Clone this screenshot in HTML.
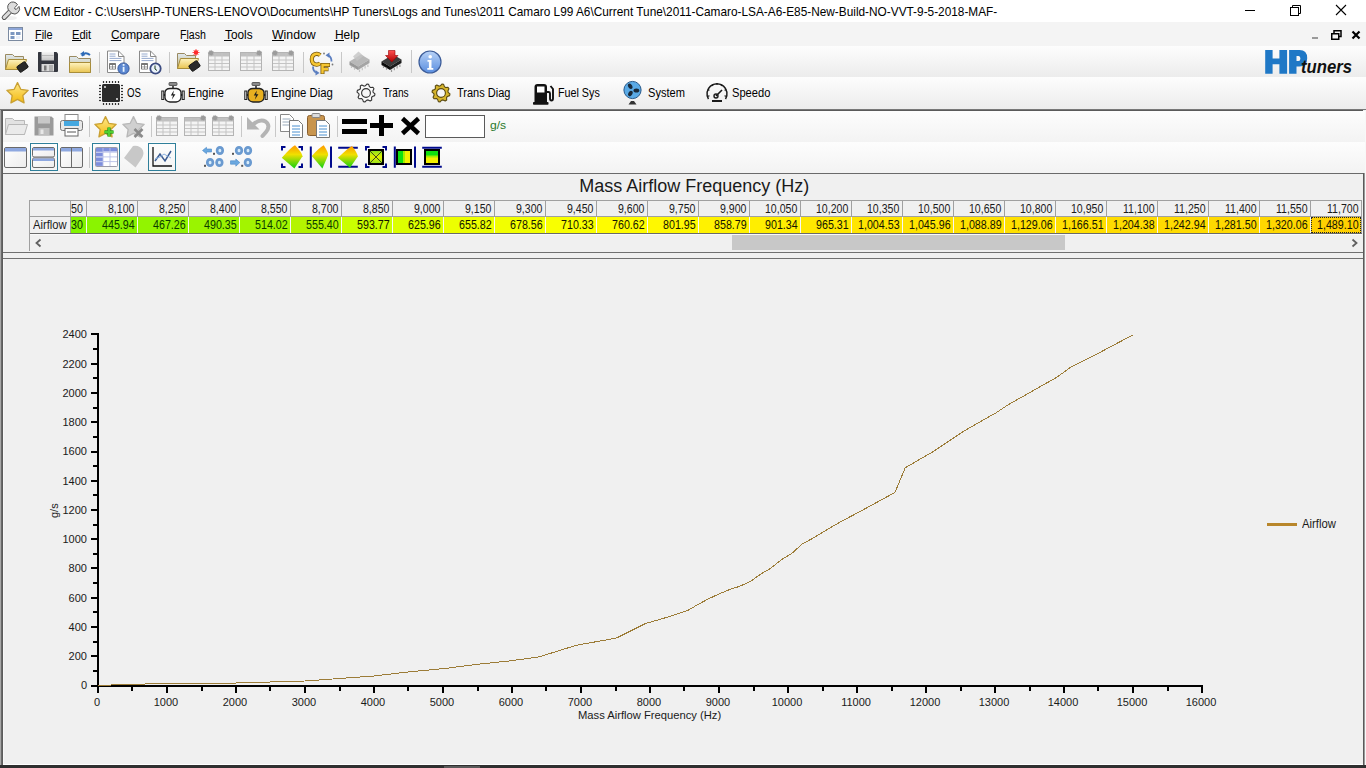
<!DOCTYPE html><html><head><meta charset="utf-8"><title>VCM Editor</title><style>
*{margin:0;padding:0;box-sizing:border-box}
html,body{width:1366px;height:768px;overflow:hidden;background:#f0f0f0;font-family:"Liberation Sans", sans-serif}
.t{position:absolute;white-space:nowrap;line-height:1;}
.b{position:absolute}
.s{position:absolute;overflow:visible}
</style></head><body><div class="b" style="left:0px;top:0px;width:1366px;height:22px;background:#fff"></div>
<svg class="s" style="left:1px;top:1px" width="22" height="22" viewBox="0 0 22 22"><ellipse cx="9" cy="17" rx="7" ry="2" fill="#000" opacity="0.06"/><path d="M3.2 16.4 L10.5 9.1" stroke="#555" stroke-width="5" stroke-linecap="round"/><path d="M3.2 16.4 L10.5 9.1" stroke="#dcdcdc" stroke-width="3" stroke-linecap="round"/><path d="M9 10.5 A5.2 5.2 0 1 1 16.5 3.8 L13.6 6.7 A1.6 1.6 0 0 0 15.3 8.4 L18 5.4 A5.2 5.2 0 0 1 10.8 12.3 Z" fill="#dcdcdc" stroke="#555" stroke-width="1"/></svg>
<div class="t" style="left:23.70px;top:5.20px;font-size:13px;color:#000;transform:scaleX(0.9102);transform-origin:0 0;">VCM Editor - C:\Users\HP-TUNERS-LENOVO\Documents\HP Tuners\Logs and Tunes\2011 Camaro L99 A6\Current Tune\2011-Camaro-LSA-A6-E85-New-Build-NO-VVT-9-5-2018-MAF-</div>
<div class="b" style="left:1245px;top:10px;width:10px;height:1px;background:#000"></div>
<svg class="s" style="left:1289px;top:4px" width="12" height="12" viewBox="0 0 12 12"><rect x="1.5" y="3.5" width="8" height="8" fill="none" stroke="#000"/><path d="M3.5 3.5 V1.5 H11.5 V9.5 H9.5" fill="none" stroke="#000"/></svg>
<svg class="s" style="left:1336px;top:5px" width="10" height="10" viewBox="0 0 10 10"><path d="M0 0 L10 10 M10 0 L0 10" stroke="#000" stroke-width="1.1"/></svg>
<div class="b" style="left:0px;top:22px;width:1366px;height:24px;background:#f4f4f4"></div>
<svg class="s" style="left:8px;top:27px" width="15" height="14" viewBox="0 0 15 14"><rect x="0.5" y="0.5" width="14" height="13" fill="#fff" stroke="#7b8aa0"/><rect x="1" y="1" width="13" height="2" fill="#8ea6d8"/><rect x="2.5" y="5" width="4" height="3" fill="#7c97c0"/><rect x="8" y="5" width="4.5" height="3" fill="#7c97c0"/><rect x="2.5" y="9" width="4" height="3" fill="#7c97c0"/><rect x="8" y="9" width="4.5" height="3" fill="#e8eef8"/></svg>
<div class="t" style="left:35.40px;top:28.62px;font-size:12.5px;color:#000;transform:scaleX(0.8696);transform-origin:0 0;">File</div>
<div class="b" style="left:35px;top:40px;width:8px;height:1px;background:#000"></div>
<div class="t" style="left:72.40px;top:28.62px;font-size:12.5px;color:#000;transform:scaleX(0.8879);transform-origin:0 0;">Edit</div>
<div class="b" style="left:72px;top:40px;width:9px;height:1px;background:#000"></div>
<div class="t" style="left:111.10px;top:28.62px;font-size:12.5px;color:#000;transform:scaleX(0.9518);transform-origin:0 0;">Compare</div>
<div class="b" style="left:111px;top:40px;width:10px;height:1px;background:#000"></div>
<div class="t" style="left:179.50px;top:28.62px;font-size:12.5px;color:#000;transform:scaleX(0.8457);transform-origin:0 0;">Flash</div>
<div class="b" style="left:184px;top:40px;width:4px;height:1px;background:#000"></div>
<div class="t" style="left:225.00px;top:28.62px;font-size:12.5px;color:#000;transform:scaleX(0.9442);transform-origin:0 0;">Tools</div>
<div class="b" style="left:224px;top:40px;width:8px;height:1px;background:#000"></div>
<div class="t" style="left:272.00px;top:28.62px;font-size:12.5px;color:#000;transform:scaleX(0.9843);transform-origin:0 0;">Window</div>
<div class="b" style="left:272px;top:40px;width:12px;height:1px;background:#000"></div>
<div class="t" style="left:335.00px;top:28.62px;font-size:12.5px;color:#000;transform:scaleX(0.9553);transform-origin:0 0;">Help</div>
<div class="b" style="left:334px;top:40px;width:10px;height:1px;background:#000"></div>
<div class="b" style="left:1312px;top:37px;width:6px;height:2px;background:#9a9a9a"></div>
<svg class="s" style="left:1331px;top:29.5px" width="11" height="10" viewBox="0 0 11 10"><rect x="0.75" y="3.75" width="7" height="5.5" fill="none" stroke="#000" stroke-width="1.5"/><path d="M3 3.5 V0.75 H10 V6.5 H8" fill="none" stroke="#000" stroke-width="1.5"/></svg>
<svg class="s" style="left:1352px;top:31px" width="8" height="8" viewBox="0 0 8 8"><path d="M0.5 0.5 L7.5 7.5 M7.5 0.5 L0.5 7.5" stroke="#000" stroke-width="2.2"/></svg>
<div class="b" style="left:0px;top:46px;width:1366px;height:31px;background:linear-gradient(#fdfdfd,#ececec)"></div>
<div class="b" style="left:0px;top:77px;width:1366px;height:32px;background:linear-gradient(#fdfdfd,#ececec)"></div>
<div class="b" style="left:0px;top:109px;width:1366px;height:1px;background:#787878"></div>
<div class="b" style="left:0px;top:110px;width:1366px;height:658px;background:#f0f0f0"></div>
<div class="b" style="left:0px;top:110px;width:1px;height:658px;background:#a8a8a8"></div>
<div class="b" style="left:1px;top:110px;width:1px;height:658px;background:#6a6a6a"></div>
<div class="b" style="left:2px;top:110px;width:1px;height:658px;background:#5c5c5c"></div>
<div class="b" style="left:3px;top:174px;width:1px;height:590px;background:#f8f8f8"></div>
<div class="b" style="left:1363px;top:173px;width:1px;height:595px;background:#5a5a5a"></div>
<div class="b" style="left:1364px;top:173px;width:1px;height:595px;background:#9a9a9a"></div>
<div class="b" style="left:1365px;top:110px;width:1px;height:658px;background:#f8f8f8"></div>
<div class="b" style="left:1px;top:110px;width:1362px;height:1px;background:#5a5a5a"></div>
<div class="b" style="left:3px;top:111px;width:1362px;height:31px;background:linear-gradient(#fdfdfd,#f3f3f3)"></div>
<div class="b" style="left:3px;top:142px;width:1362px;height:31px;background:linear-gradient(#fdfdfd,#f3f3f3)"></div>
<div class="b" style="left:3px;top:173px;width:1360px;height:1px;background:#6a6a6a"></div>
<div class="b" style="left:0px;top:765px;width:1366px;height:3px;background:#2f2f2f"></div>
<div class="b" style="left:3px;top:764px;width:1360px;height:1px;background:#fff"></div>
<div class="b" style="left:444px;top:766px;width:36px;height:2px;background:#5a5a5a"></div>
<svg width="0" height="0" style="position:absolute"><defs>
<linearGradient id="gFold" x1="0" y1="0" x2="0" y2="1"><stop offset="0" stop-color="#fff4c0"/><stop offset="1" stop-color="#e9c451"/></linearGradient>
<linearGradient id="gFoldB" x1="0" y1="0" x2="0" y2="1"><stop offset="0" stop-color="#dfe9f3"/><stop offset="1" stop-color="#c9b978"/></linearGradient>
<linearGradient id="gStar" x1="0" y1="0" x2="0" y2="1"><stop offset="0" stop-color="#ffe98a"/><stop offset="1" stop-color="#f2b90f"/></linearGradient>
<linearGradient id="gGrey" x1="0" y1="0" x2="0" y2="1"><stop offset="0" stop-color="#e8e8e8"/><stop offset="1" stop-color="#c8c8c8"/></linearGradient>
<linearGradient id="gInfo" x1="0" y1="0" x2="0" y2="1"><stop offset="0" stop-color="#b8d2f6"/><stop offset="1" stop-color="#5a8ee0"/></linearGradient>
<linearGradient id="gDia" x1="0" y1="0" x2="1" y2="1"><stop offset="0" stop-color="#ff9a00"/><stop offset="0.45" stop-color="#f3e000"/><stop offset="1" stop-color="#00d000"/></linearGradient>
<linearGradient id="gWin" x1="0" y1="0" x2="1" y2="1"><stop offset="0" stop-color="#ffffff"/><stop offset="1" stop-color="#ececec"/></linearGradient>
<linearGradient id="gFan" x1="0" y1="0" x2="0" y2="1"><stop offset="0" stop-color="#8cc8f0"/><stop offset="1" stop-color="#3d95d8"/></linearGradient>
</defs></svg>
<svg class="s" style="left:4px;top:50px" width="24" height="24" viewBox="0 0 24 24"><path d="M1.5 4.5 h7 l2 2 h9 v13 h-18z" fill="url(#gFoldB)" stroke="#9a8a60"/><path d="M1.5 19.5 l3 -10 h18 l-3 10z" fill="url(#gFold)" stroke="#a88d3a"/><rect x="13.5" y="13.5" width="10" height="7" rx="1.2" transform="rotate(-35 18.5 17)" fill="#2a2a2a" stroke="#111" stroke-width="0.8"/></svg>
<svg class="s" style="left:37px;top:51px" width="22" height="22" viewBox="0 0 22 22"><path d="M1.5 1 h18 l1.5 1.5 v17.5 q0 1 -1 1 h-18 q-1 0 -1 -1 v-18 q0 -1 0.5 -1z" fill="#34373f"/><defs><linearGradient id="gFlp" x1="0" y1="0" x2="0" y2="1"><stop offset="0" stop-color="#f4f4f4"/><stop offset="1" stop-color="#c4c4c4"/></linearGradient></defs><rect x="4.5" y="1" width="12.5" height="8.5" fill="url(#gFlp)"/><path d="M5 4.5 h11.5" stroke="#b0b0b0" stroke-width="0.8"/><rect x="4.5" y="13" width="12.5" height="7.5" fill="#d8d8d8"/><rect x="7" y="14.5" width="2.5" height="5" fill="#777"/><rect x="12" y="14" width="4" height="6" fill="#b0b0b0"/></svg>
<svg class="s" style="left:68px;top:50px" width="24" height="24" viewBox="0 0 24 24"><path d="M1.5 6.5 h7 l2 2 h12 v14 h-21z" fill="url(#gFoldB)" stroke="#9a8a60"/><path d="M1.5 22.5 v-10 h21 v10z" fill="url(#gFold)" stroke="#a88d3a"/><path d="M14 6 q3 -5 8 -1" fill="none" stroke="#2e6bb8" stroke-width="2"/><path d="M12 4 l4 -3 l0.5 5z" fill="#2e6bb8"/></svg>
<div class="b" style="left:99px;top:52px;width:1px;height:21px;background:#c8c8c8"></div>
<svg class="s" style="left:106px;top:50px" width="24" height="24" viewBox="0 0 24 24"><path d="M1.5 1 h11 l5.5 5.5 v16 h-16.5z" fill="#fff" stroke="#8a8a8a" stroke-width="1"/><path d="M12.5 1 v5.5 h5.5" fill="none" stroke="#8a8a8a"/><path d="M3.5 4 h6 M3.5 6.2 h6 M3.5 8.4 h12 M3.5 10.6 h12" stroke="#8aa0c8" stroke-width="0.9"/><rect x="3" y="13" width="7" height="6.5" rx="0.8" fill="#777"/><rect x="4" y="15" width="2.2" height="1.6" fill="#fff"/><rect x="6.9" y="15" width="2.2" height="1.6" fill="#fff"/><rect x="4" y="17.3" width="2.2" height="1.4" fill="#fff"/><rect x="6.9" y="17.3" width="2.2" height="1.4" fill="#fff"/><circle cx="17.5" cy="18.5" r="5.6" fill="#5a86d0" stroke="#34569a" stroke-width="1"/><rect x="16.7" y="16.8" width="1.8" height="5" fill="#e8f4ff"/><rect x="16.7" y="14" width="1.8" height="1.8" fill="#e8f4ff"/></svg>
<svg class="s" style="left:138px;top:50px" width="24" height="24" viewBox="0 0 24 24"><path d="M1.5 1 h11 l5.5 5.5 v16 h-16.5z" fill="#fff" stroke="#8a8a8a" stroke-width="1"/><path d="M12.5 1 v5.5 h5.5" fill="none" stroke="#8a8a8a"/><path d="M3.5 4 h6 M3.5 6.2 h6 M3.5 8.4 h12 M3.5 10.6 h12" stroke="#8aa0c8" stroke-width="0.9"/><rect x="3" y="13" width="7" height="6.5" rx="0.8" fill="#777"/><rect x="4" y="15" width="2.2" height="1.6" fill="#fff"/><rect x="6.9" y="15" width="2.2" height="1.6" fill="#fff"/><rect x="4" y="17.3" width="2.2" height="1.4" fill="#fff"/><rect x="6.9" y="17.3" width="2.2" height="1.4" fill="#fff"/><circle cx="17.5" cy="18.5" r="5.2" fill="#eaf2fa" stroke="#3a4a80" stroke-width="1.8"/><path d="M17 15.5 V19 L19 20.5" stroke="#1a3a1a" stroke-width="1" fill="none"/></svg>
<div class="b" style="left:169px;top:52px;width:1px;height:21px;background:#c8c8c8"></div>
<svg class="s" style="left:176px;top:49px" width="24" height="24" viewBox="0 0 24 24"><path d="M1.5 4.5 h7 l2 2 h9 v13 h-18z" fill="url(#gFoldB)" stroke="#9a8a60"/><path d="M1.5 19.5 l3 -10 h18 l-3 10z" fill="url(#gFold)" stroke="#a88d3a"/><rect x="13.5" y="13.5" width="10" height="7" rx="1.2" transform="rotate(-35 18.5 17)" fill="#2a2a2a" stroke="#111" stroke-width="0.8"/><circle cx="20" cy="3.5" r="2.2" fill="#ff2020"/><path d="M20 0 v7 M16.5 3.5 h7 M17.6 1.1 l4.8 4.8 M22.4 1.1 l-4.8 4.8" stroke="#ff3030" stroke-width="0.8"/></svg>
<svg class="s" style="left:207px;top:49px" width="24" height="24" viewBox="0 0 24 24"><rect x="1.5" y="3.5" width="21" height="18" fill="#f4f4f4" stroke="#b4b4b4"/><rect x="2" y="4" width="20" height="3.5" fill="#c0c0c0"/><path d="M2 11 h20" stroke="#c4c4c4"/><path d="M2 14.5 h20" stroke="#c4c4c4"/><path d="M2 18 h20" stroke="#c4c4c4"/><path d="M8 4 v17" stroke="#c4c4c4"/><path d="M15 4 v17" stroke="#c4c4c4"/><circle cx="4" cy="4" r="2.6" fill="#9c9c9c" stroke="#bdbdbd" stroke-dasharray="1 1"/></svg>
<svg class="s" style="left:239px;top:49px" width="24" height="24" viewBox="0 0 24 24"><rect x="1.5" y="3.5" width="21" height="18" fill="#f4f4f4" stroke="#b4b4b4"/><rect x="2" y="4" width="20" height="3.5" fill="#c0c0c0"/><path d="M2 11 h20" stroke="#c4c4c4"/><path d="M2 14.5 h20" stroke="#c4c4c4"/><path d="M2 18 h20" stroke="#c4c4c4"/><path d="M8 4 v17" stroke="#c4c4c4"/><path d="M15 4 v17" stroke="#c4c4c4"/><circle cx="20" cy="4" r="2.6" fill="#9c9c9c" stroke="#bdbdbd" stroke-dasharray="1 1"/></svg>
<svg class="s" style="left:271px;top:49px" width="24" height="24" viewBox="0 0 24 24"><rect x="1.5" y="3.5" width="21" height="18" fill="#f4f4f4" stroke="#b4b4b4"/><rect x="2" y="4" width="20" height="3.5" fill="#c0c0c0"/><path d="M2 11 h20" stroke="#c4c4c4"/><path d="M2 14.5 h20" stroke="#c4c4c4"/><path d="M2 18 h20" stroke="#c4c4c4"/><path d="M8 4 v17" stroke="#c4c4c4"/><path d="M15 4 v17" stroke="#c4c4c4"/><circle cx="4" cy="4" r="2.6" fill="#9c9c9c" stroke="#bdbdbd" stroke-dasharray="1 1"/><circle cx="20" cy="4" r="2.6" fill="#9c9c9c" stroke="#bdbdbd" stroke-dasharray="1 1"/></svg>
<div class="b" style="left:303px;top:52px;width:1px;height:21px;background:#c8c8c8"></div>
<svg class="s" style="left:310px;top:51px" width="24" height="24" viewBox="0 0 24 24"><path d="M10.2 4.2 Q8.5 2.6 6.5 2.8 Q1.8 3.3 1.8 8.3 Q1.8 13.3 6.5 13.6 Q8.8 13.8 10.2 12.2" fill="none" stroke="#7a5a10" stroke-width="4.2"/><path d="M10.2 4.2 Q8.5 2.6 6.5 2.8 Q1.8 3.3 1.8 8.3 Q1.8 13.3 6.5 13.6 Q8.8 13.8 10.2 12.2" fill="none" stroke="#f6c632" stroke-width="2.6"/><path d="M12.5 23 V14 H20 M12.5 18.2 H18.5" fill="none" stroke="#7a5a10" stroke-width="4"/><path d="M12.5 22.5 V14 H19.5 M12.5 18.2 H18" fill="none" stroke="#f6c632" stroke-width="2.4"/><path d="M21.5 10.5 Q21.5 6 18.5 4.5" fill="none" stroke="#5b7ec0" stroke-width="1.8"/><path d="M15.5 4.2 L19.5 1.5 L19.5 7z" fill="#5b7ec0"/><path d="M3 15.5 Q3 20 6 21.5" fill="none" stroke="#5b7ec0" stroke-width="1.8"/><path d="M9.5 22 L5.5 24.5 L5.5 19z" fill="#5b7ec0"/><circle cx="14" cy="2.5" r="0.9" fill="#777"/><circle cx="22.5" cy="13.5" r="0.9" fill="#777"/></svg>
<div class="b" style="left:341px;top:52px;width:1px;height:21px;background:#c8c8c8"></div>
<svg class="s" style="left:348px;top:49px" width="24" height="24" viewBox="0 0 24 24"><path d="M1.5 12.5 L13 5.5 L21.5 10.5 L10 17.5 Z" fill="#b8b8b8"/><path d="M1.5 12.5 V16 L10 21 V17.5 Z" fill="#989898"/><path d="M10 17.5 V21 L21.5 14 V10.5 Z" fill="#a4a4a4"/><path d="M11.5 20.5 v2.5" stroke="#c4c4c4" stroke-width="1.2"/><path d="M14.3 18.8 v2.5" stroke="#c4c4c4" stroke-width="1.2"/><path d="M17.1 17.1 v2.5" stroke="#c4c4c4" stroke-width="1.2"/><path d="M19.9 15.4 v2.5" stroke="#c4c4c4" stroke-width="1.2"/><path d="M3.5 16.8 v2.2" stroke="#c4c4c4" stroke-width="1.2"/><path d="M6.5 18.6 v2.2" stroke="#c4c4c4" stroke-width="1.2"/><path d="M5 7.5 L10.5 2.5 L15.5 7 L9 12z" fill="#c4c4c4" opacity="0.8"/></svg>
<svg class="s" style="left:380px;top:49px" width="24" height="24" viewBox="0 0 24 24"><path d="M1.5 12.5 L13 5.5 L21.5 10.5 L10 17.5 Z" fill="#3c3c3c"/><path d="M1.5 12.5 V16 L10 21 V17.5 Z" fill="#0c0c0c"/><path d="M10 17.5 V21 L21.5 14 V10.5 Z" fill="#1c1c1c"/><path d="M11.5 20.5 v2.5" stroke="#9a9a9a" stroke-width="1.2"/><path d="M14.3 18.8 v2.5" stroke="#9a9a9a" stroke-width="1.2"/><path d="M17.1 17.1 v2.5" stroke="#9a9a9a" stroke-width="1.2"/><path d="M19.9 15.4 v2.5" stroke="#9a9a9a" stroke-width="1.2"/><path d="M3.5 16.8 v2.2" stroke="#9a9a9a" stroke-width="1.2"/><path d="M6.5 18.6 v2.2" stroke="#9a9a9a" stroke-width="1.2"/><defs><linearGradient id="gArr" x1="0" y1="0" x2="0" y2="1"><stop offset="0" stop-color="#ff5050"/><stop offset="1" stop-color="#b00000"/></linearGradient></defs><path d="M8.5 1.5 H15 V6.5 H18 L11.8 13 L5.5 6.5 H8.5 Z" fill="url(#gArr)" stroke="#900" stroke-width="0.6"/></svg>
<div class="b" style="left:411px;top:50px;width:1px;height:23px;background:#c8c8c8"></div>
<svg class="s" style="left:418px;top:50px" width="24" height="24" viewBox="0 0 24 24"><circle cx="12" cy="12" r="11" fill="url(#gInfo)" stroke="#3c5c98" stroke-width="1.2"/><path d="M9.5 10 h4 v8 h1.8 v1.8 h-6 v-1.8 h1.6 v-6.2 h-1.4z" fill="#fff"/><circle cx="12.2" cy="6.8" r="1.8" fill="#fff"/></svg>
<svg class="s" style="left:0;top:0" width="1366" height="768"><path d="M1265.2 50.1 H1272.6 V58.6 H1279.4 V50.1 H1287.1 V73.7 H1279.4 V64.3 H1272.6 V73.7 H1265.2 Z" fill="#1f78c6"/><path d="M1289.1 50.1 H1299.5 Q1307.2 50.1 1307.2 58.2 Q1307.2 66.4 1299.5 66.4 H1296.5 V73.7 H1289.1 Z M1296.5 56 V61 H1298.6 Q1300.4 61 1300.4 58.5 Q1300.4 56 1298.6 56 Z" fill="#1f78c6" fill-rule="evenodd"/></svg>
<div class="t" style="left:1301.00px;top:58.46px;font-size:18px;color:#111;font-weight:bold;transform:scaleX(0.9273);transform-origin:0 0;font-style:italic">tuners</div>
<svg class="s" style="left:5.5px;top:81px" width="23" height="23" viewBox="0 0 23 23"><polygon points="11.50,1.60 14.79,8.27 22.15,9.34 16.83,14.53 18.08,21.86 11.50,18.40 4.92,21.86 6.17,14.53 0.85,9.34 8.21,8.27" fill="url(#gStar)" stroke="#c9a032" stroke-width="1.3" stroke-linejoin="round"/></svg>
<div class="t" style="left:32.30px;top:87.14px;font-size:12px;color:#000;transform:scaleX(0.9418);transform-origin:0 0;">Favorites</div>
<svg class="s" style="left:99px;top:81px" width="24" height="24" viewBox="0 0 24 24"><rect x="3" y="3" width="18" height="18" rx="1.5" fill="#2b2b2b"/><rect x="3.9" y="0" width="1.2" height="2" fill="#333"/><rect x="3.9" y="22" width="1.2" height="2" fill="#333"/><rect x="0" y="3.9" width="2" height="1.2" fill="#333"/><rect x="22" y="3.9" width="2" height="1.2" fill="#333"/><rect x="6.9" y="0" width="1.2" height="2" fill="#333"/><rect x="6.9" y="22" width="1.2" height="2" fill="#333"/><rect x="0" y="6.9" width="2" height="1.2" fill="#333"/><rect x="22" y="6.9" width="2" height="1.2" fill="#333"/><rect x="9.9" y="0" width="1.2" height="2" fill="#333"/><rect x="9.9" y="22" width="1.2" height="2" fill="#333"/><rect x="0" y="9.9" width="2" height="1.2" fill="#333"/><rect x="22" y="9.9" width="2" height="1.2" fill="#333"/><rect x="12.9" y="0" width="1.2" height="2" fill="#333"/><rect x="12.9" y="22" width="1.2" height="2" fill="#333"/><rect x="0" y="12.9" width="2" height="1.2" fill="#333"/><rect x="22" y="12.9" width="2" height="1.2" fill="#333"/><rect x="15.9" y="0" width="1.2" height="2" fill="#333"/><rect x="15.9" y="22" width="1.2" height="2" fill="#333"/><rect x="0" y="15.9" width="2" height="1.2" fill="#333"/><rect x="22" y="15.9" width="2" height="1.2" fill="#333"/><rect x="18.9" y="0" width="1.2" height="2" fill="#333"/><rect x="18.9" y="22" width="1.2" height="2" fill="#333"/><rect x="0" y="18.9" width="2" height="1.2" fill="#333"/><rect x="22" y="18.9" width="2" height="1.2" fill="#333"/><circle cx="6" cy="6" r="0.9" fill="#fff"/><circle cx="18" cy="18" r="0.9" fill="#fff"/></svg>
<div class="t" style="left:126.60px;top:87.14px;font-size:12px;color:#000;transform:scaleX(0.8058);transform-origin:0 0;">OS</div>
<svg class="s" style="left:161px;top:81px" width="24" height="24" viewBox="0 0 24 24"><rect x="8" y="1.5" width="8" height="3" rx="0.8" fill="#8a8a8a" stroke="#444" stroke-width="0.8"/><rect x="11" y="4.5" width="2" height="3" fill="#555"/><path d="M0.8 10 H2.8 V18.5 H0.8 Z M21.2 10 H23.2 V18.5 H21.2 Z" fill="#fff" stroke="#222" stroke-width="1.1"/><path d="M2.8 14 H4 M20 14 H21.2" stroke="#222" stroke-width="1.8"/><path d="M4 11.5 Q4.5 7.5 9 7.5 H15.5 Q19.5 8 20 11.5 V16.5 Q19.5 20.5 15 21 H9 Q4.5 20.5 4 16.5 Z" fill="#fff" stroke="#222" stroke-width="1.3"/><path d="M12.8 9.5 L9.8 14.5 H12 L10.8 18.8 L14.4 13.2 H12.2 Z" fill="#1e1e1e"/></svg>
<div class="t" style="left:188.20px;top:87.14px;font-size:12px;color:#000;transform:scaleX(0.9579);transform-origin:0 0;">Engine</div>
<svg class="s" style="left:244px;top:81px" width="24" height="24" viewBox="0 0 24 24"><rect x="8" y="1.5" width="8" height="3" rx="0.8" fill="#8a8a8a" stroke="#444" stroke-width="0.8"/><rect x="11" y="4.5" width="2" height="3" fill="#555"/><path d="M0.8 10 H2.8 V18.5 H0.8 Z M21.2 10 H23.2 V18.5 H21.2 Z" fill="#fff" stroke="#222" stroke-width="1.1"/><path d="M2.8 14 H4 M20 14 H21.2" stroke="#222" stroke-width="1.8"/><path d="M4 11.5 Q4.5 7.5 9 7.5 H15.5 Q19.5 8 20 11.5 V16.5 Q19.5 20.5 15 21 H9 Q4.5 20.5 4 16.5 Z" fill="#e8b020" stroke="#222" stroke-width="1.3"/><path d="M12.8 9.5 L9.8 14.5 H12 L10.8 18.8 L14.4 13.2 H12.2 Z" fill="#1e1e1e"/></svg>
<div class="t" style="left:271.30px;top:87.14px;font-size:12px;color:#000;transform:scaleX(0.9468);transform-origin:0 0;">Engine Diag</div>
<svg class="s" style="left:356px;top:83px" width="20" height="20" viewBox="0 0 20 20"><polygon points="18.96,10.90 18.61,12.63 16.34,13.41 15.56,14.58 15.70,16.97 14.23,17.95 12.08,16.89 10.69,17.17 9.10,18.96 7.37,18.61 6.59,16.34 5.42,15.56 3.03,15.70 2.05,14.23 3.11,12.08 2.83,10.69 1.04,9.10 1.39,7.37 3.66,6.59 4.44,5.42 4.30,3.03 5.77,2.05 7.92,3.11 9.31,2.83 10.90,1.04 12.63,1.39 13.41,3.66 14.58,4.44 16.97,4.30 17.95,5.77 16.89,7.92 17.17,9.31" fill="#fafafa" stroke="#333" stroke-width="1.1" stroke-linejoin="round"/><circle cx="10" cy="10" r="4.4" fill="#f6f6f6" stroke="#333" stroke-width="1.1"/></svg>
<div class="t" style="left:382.60px;top:87.14px;font-size:12px;color:#000;transform:scaleX(0.8496);transform-origin:0 0;">Trans</div>
<svg class="s" style="left:431px;top:83px" width="20" height="20" viewBox="0 0 20 20"><polygon points="18.96,10.90 18.61,12.63 16.34,13.41 15.56,14.58 15.70,16.97 14.23,17.95 12.08,16.89 10.69,17.17 9.10,18.96 7.37,18.61 6.59,16.34 5.42,15.56 3.03,15.70 2.05,14.23 3.11,12.08 2.83,10.69 1.04,9.10 1.39,7.37 3.66,6.59 4.44,5.42 4.30,3.03 5.77,2.05 7.92,3.11 9.31,2.83 10.90,1.04 12.63,1.39 13.41,3.66 14.58,4.44 16.97,4.30 17.95,5.77 16.89,7.92 17.17,9.31" fill="#d6b52c" stroke="#5a4a10" stroke-width="1.1" stroke-linejoin="round"/><circle cx="10" cy="10" r="4.4" fill="#f6f6f6" stroke="#5a4a10" stroke-width="1.1"/></svg>
<div class="t" style="left:457.30px;top:87.14px;font-size:12px;color:#000;transform:scaleX(0.9167);transform-origin:0 0;">Trans Diag</div>
<svg class="s" style="left:533px;top:82.5px" width="21" height="23" viewBox="0 0 21 23"><path d="M1.5 4 Q1.5 1 4.5 1 H11 Q14 1 14 4 V19.5 H1.5 Z" fill="#111"/><rect x="4" y="3.5" width="7.5" height="6" fill="#fff"/><rect x="0" y="19" width="15.5" height="2.8" rx="0.8" fill="#111"/><path d="M14 9 H15.5 Q17 9 17 10.5 V15.5 Q17 17.5 18.5 17.5 Q20 17.5 20 15.5 V6 L17.5 3" fill="none" stroke="#111" stroke-width="1.9"/></svg>
<div class="t" style="left:558.30px;top:87.14px;font-size:12px;color:#000;transform:scaleX(0.8944);transform-origin:0 0;">Fuel Sys</div>
<svg class="s" style="left:622.5px;top:80.5px" width="19" height="24" viewBox="0 0 19 24"><circle cx="9.5" cy="9" r="8.6" fill="#5aaae6" stroke="#2a5a8a" stroke-width="1"/><ellipse cx="7.2" cy="5.2" rx="2.9" ry="2" fill="#1a2a3a" transform="rotate(60 7.2 5.2)"/><ellipse cx="13.4" cy="9.6" rx="2.9" ry="2" fill="#1a2a3a" transform="rotate(0 13.4 9.6)"/><ellipse cx="7.4" cy="12.6" rx="2.9" ry="2" fill="#1a2a3a" transform="rotate(-60 7.4 12.6)"/><path d="M5.5 23.5 L8 20 H11 L13.5 23.5 Z" fill="#333"/></svg>
<div class="t" style="left:647.50px;top:87.14px;font-size:12px;color:#000;transform:scaleX(0.9225);transform-origin:0 0;">System</div>
<svg class="s" style="left:705px;top:81px" width="24" height="22" viewBox="0 0 24 22"><path d="M3.5 18 A10 10 0 1 1 20.5 18" fill="none" stroke="#1a1a1a" stroke-width="1.5"/><path d="M2.60 15.42 L4.48 14.74" stroke="#1a1a1a" stroke-width="1.2"/><path d="M2.60 8.58 L4.48 9.26" stroke="#1a1a1a" stroke-width="1.2"/><path d="M7.00 3.34 L8.00 5.07" stroke="#1a1a1a" stroke-width="1.2"/><path d="M12.00 2.00 L12.00 4.00" stroke="#1a1a1a" stroke-width="1.2"/><path d="M17.00 3.34 L16.00 5.07" stroke="#1a1a1a" stroke-width="1.2"/><path d="M21.40 8.58 L19.52 9.26" stroke="#1a1a1a" stroke-width="1.2"/><path d="M21.40 15.42 L19.52 14.74" stroke="#1a1a1a" stroke-width="1.2"/><path d="M11 15 L17 9" stroke="#1a1a1a" stroke-width="1.6"/><circle cx="11" cy="15" r="2" fill="none" stroke="#1a1a1a" stroke-width="1.4"/><rect x="7" y="19" width="10" height="2" fill="#1a1a1a"/></svg>
<div class="t" style="left:732.10px;top:87.14px;font-size:12px;color:#000;transform:scaleX(0.9281);transform-origin:0 0;">Speedo</div>
<svg class="s" style="left:4px;top:115px" width="24" height="22" viewBox="0 0 24 22"><path d="M1.5 3.5 h7 l2 2 h10 v14 h-19z" fill="#e2e2e2" stroke="#b8b8b8"/><path d="M1.5 19.5 l3 -10 h19 l-3 10z" fill="#eaeaea" stroke="#b8b8b8"/></svg>
<svg class="s" style="left:34px;top:116px" width="20" height="20" viewBox="0 0 20 20"><path d="M0.5 0.5 h17 l2 2 v17 h-19z" fill="#9a9a9a"/><rect x="4" y="0.5" width="12" height="7" fill="#c8c8c8"/><rect x="4.5" y="12" width="11" height="7" fill="#c0c0c0"/><rect x="6.5" y="13.5" width="3" height="4.5" fill="#e8e8e8"/></svg>
<svg class="s" style="left:60px;top:114px" width="23" height="23" viewBox="0 0 23 23"><rect x="5" y="0.5" width="13" height="7" fill="#fff" stroke="#888"/><rect x="0.5" y="6.5" width="22" height="10" rx="2" fill="#e8e8e8" stroke="#777"/><rect x="4" y="7" width="15" height="5" fill="#45a8e0"/><rect x="5" y="14.5" width="13" height="7.5" fill="#fff" stroke="#666"/><path d="M7 18 h9" stroke="#555"/></svg>
<div class="b" style="left:89px;top:116px;width:1px;height:21px;background:#c8c8c8"></div>
<svg class="s" style="left:94px;top:115px" width="24" height="23" viewBox="0 0 24 23"><polygon points="11.50,1.60 14.79,8.27 22.15,9.34 16.83,14.53 18.08,21.86 11.50,18.40 4.92,21.86 6.17,14.53 0.85,9.34 8.21,8.27" fill="url(#gStar)" stroke="#c9a032" stroke-width="1.3" stroke-linejoin="round"/><path d="M15 12.5 v9 M10.5 17 h9" stroke="#2c9a20" stroke-width="3.4"/><path d="M15 12.5 v9 M10.5 17 h9" stroke="#4ed030" stroke-width="2"/></svg>
<svg class="s" style="left:122px;top:115px" width="24" height="23" viewBox="0 0 24 23"><polygon points="11.50,1.60 14.79,8.27 22.15,9.34 16.83,14.53 18.08,21.86 11.50,18.40 4.92,21.86 6.17,14.53 0.85,9.34 8.21,8.27" fill="#d0d0d0" stroke="#b8b8b8" stroke-width="1.3" stroke-linejoin="round"/><path d="M12.5 14 l8 8 M20.5 14 l-8 8" stroke="#8a8a8a" stroke-width="2.6"/></svg>
<div class="b" style="left:151px;top:116px;width:1px;height:21px;background:#c8c8c8"></div>
<svg class="s" style="left:155px;top:114px" width="24" height="24" viewBox="0 0 24 24"><rect x="1.5" y="3.5" width="21" height="18" fill="#f4f4f4" stroke="#b4b4b4"/><rect x="2" y="4" width="20" height="3.5" fill="#c0c0c0"/><path d="M2 11 h20" stroke="#c4c4c4"/><path d="M2 14.5 h20" stroke="#c4c4c4"/><path d="M2 18 h20" stroke="#c4c4c4"/><path d="M8 4 v17" stroke="#c4c4c4"/><path d="M15 4 v17" stroke="#c4c4c4"/><circle cx="4" cy="4" r="2.6" fill="#9c9c9c" stroke="#bdbdbd" stroke-dasharray="1 1"/></svg>
<svg class="s" style="left:183px;top:114px" width="24" height="24" viewBox="0 0 24 24"><rect x="1.5" y="3.5" width="21" height="18" fill="#f4f4f4" stroke="#b4b4b4"/><rect x="2" y="4" width="20" height="3.5" fill="#c0c0c0"/><path d="M2 11 h20" stroke="#c4c4c4"/><path d="M2 14.5 h20" stroke="#c4c4c4"/><path d="M2 18 h20" stroke="#c4c4c4"/><path d="M8 4 v17" stroke="#c4c4c4"/><path d="M15 4 v17" stroke="#c4c4c4"/><circle cx="20" cy="4" r="2.6" fill="#9c9c9c" stroke="#bdbdbd" stroke-dasharray="1 1"/></svg>
<svg class="s" style="left:211px;top:114px" width="24" height="24" viewBox="0 0 24 24"><rect x="1.5" y="3.5" width="21" height="18" fill="#f4f4f4" stroke="#b4b4b4"/><rect x="2" y="4" width="20" height="3.5" fill="#c0c0c0"/><path d="M2 11 h20" stroke="#c4c4c4"/><path d="M2 14.5 h20" stroke="#c4c4c4"/><path d="M2 18 h20" stroke="#c4c4c4"/><path d="M8 4 v17" stroke="#c4c4c4"/><path d="M15 4 v17" stroke="#c4c4c4"/><circle cx="4" cy="4" r="2.6" fill="#9c9c9c" stroke="#bdbdbd" stroke-dasharray="1 1"/><circle cx="20" cy="4" r="2.6" fill="#9c9c9c" stroke="#bdbdbd" stroke-dasharray="1 1"/></svg>
<div class="b" style="left:241px;top:116px;width:1px;height:21px;background:#c8c8c8"></div>
<svg class="s" style="left:245px;top:115px" width="26" height="24" viewBox="0 0 26 24"><path d="M2 2 V14.5 H14.5 Z" fill="#b4b4b4"/><path d="M8 9.5 Q15 3.5 20.5 6.5 Q26 10.5 21 17 L17.5 21" fill="none" stroke="#b4b4b4" stroke-width="4" stroke-linecap="round"/></svg>
<div class="b" style="left:275px;top:116px;width:1px;height:21px;background:#c8c8c8"></div>
<svg class="s" style="left:280px;top:114px" width="25" height="24" viewBox="0 0 25 24"><path d="M0.5 0.5 h9 l4 4 v13 h-13z" fill="#fff" stroke="#888"/><path d="M2.5 5 h8 M2.5 8 h8 M2.5 11 h8" stroke="#9ab"/><path d="M9.5 6.5 h9 l4 4 v13 h-13z" fill="#fff" stroke="#777"/><path d="M12 12 h8 M12 15 h8 M12 18 h8 M12 21 h8" stroke="#4a90d0"/></svg>
<svg class="s" style="left:307px;top:113px" width="25" height="25" viewBox="0 0 25 25"><rect x="0.5" y="2.5" width="17" height="20" rx="2" fill="#c8954e" stroke="#8a6030"/><rect x="5" y="0.5" width="8" height="4" rx="1" fill="#ddd" stroke="#888"/><path d="M9.5 7.5 h9 l4 4 v13 h-13z" fill="#fff" stroke="#777"/><path d="M12 13 h8 M12 16 h8 M12 19 h8 M12 22 h8" stroke="#4a90d0"/></svg>
<div class="b" style="left:337px;top:116px;width:1px;height:21px;background:#c8c8c8"></div>
<div class="b" style="left:342px;top:119px;width:25px;height:5px;background:#000"></div>
<div class="b" style="left:342px;top:129px;width:25px;height:5px;background:#000"></div>
<div class="b" style="left:370px;top:123px;width:23px;height:5px;background:#000"></div>
<div class="b" style="left:379px;top:115px;width:5px;height:21px;background:#000"></div>
<svg class="s" style="left:400px;top:116px" width="21" height="20" viewBox="0 0 21 20"><path d="M2.5 2.5 L18.5 17.5 M18.5 2.5 L2.5 17.5" stroke="#000" stroke-width="4.5"/></svg>
<div class="b" style="left:425px;top:115px;width:60px;height:23px;background:#fff;border:1px solid #5a5a5a"></div>
<div class="t" style="left:489.80px;top:120.27px;font-size:11.5px;color:#2a7a2a;transform:scaleX(1.0537);transform-origin:0 0;">g/s</div>
<svg class="s" style="left:4px;top:147px" width="23" height="21" viewBox="0 0 23 21"><rect x="0.5" y="0.5" width="22" height="20" rx="1.5" fill="url(#gWin)" stroke="#6a6a6a"/><rect x="1" y="1" width="21" height="3.5" fill="#8ea8e0"/></svg>
<div class="b" style="left:30px;top:143px;width:28px;height:28px;border:1px solid #2f7f9a"></div>
<svg class="s" style="left:32px;top:147px" width="23" height="21" viewBox="0 0 23 21"><rect x="0.5" y="0.5" width="22" height="9.5" rx="1.5" fill="url(#gWin)" stroke="#6a6a6a"/><rect x="1" y="1" width="21" height="2.5" fill="#8ea8e0"/><rect x="0.5" y="11" width="22" height="9.5" rx="1.5" fill="url(#gWin)" stroke="#6a6a6a"/><rect x="1" y="11.5" width="21" height="2.5" fill="#8ea8e0"/></svg>
<svg class="s" style="left:60px;top:147px" width="23" height="21" viewBox="0 0 23 21"><rect x="0.5" y="0.5" width="22" height="20" rx="1.5" fill="url(#gWin)" stroke="#6a6a6a"/><rect x="1" y="1" width="21" height="3.5" fill="#8ea8e0"/><path d="M11.5 0.5 v20" stroke="#6a6a6a"/></svg>
<div class="b" style="left:89px;top:147px;width:1px;height:21px;background:#c8c8c8"></div>
<div class="b" style="left:92px;top:143px;width:28px;height:28px;border:1px solid #2f7f9a"></div>
<svg class="s" style="left:95px;top:147px" width="23" height="20" viewBox="0 0 23 20"><rect x="0.5" y="0.5" width="22" height="19" rx="1" fill="#fff" stroke="#9a9aa8"/><rect x="1" y="1" width="21" height="3.5" fill="#7e8edc"/><rect x="1" y="1.0" width="7" height="3.8" fill="#7e8edc"/><rect x="1" y="5.7" width="7" height="3.8" fill="#7e8edc"/><rect x="1" y="10.4" width="7" height="3.8" fill="#7e8edc"/><rect x="1" y="15.1" width="7" height="3.8" fill="#7e8edc"/><path d="M1 5.2 h21 M1 9.9 h21 M1 14.6 h21 M8 1 v18 M15 1 v18" stroke="#b8c0e8" stroke-width="0.9"/></svg>
<svg class="s" style="left:123px;top:145px" width="22" height="24" viewBox="0 0 22 24"><path d="M10 1 Q17 0 20 5.5 Q21.5 10 18 14.5 L12.5 22.5 L1 13 Z" fill="#c8c8c8"/></svg>
<div class="b" style="left:148px;top:143px;width:28px;height:28px;border:1px solid #2f7f9a"></div>
<svg class="s" style="left:151px;top:146px" width="22" height="22" viewBox="0 0 22 22"><path d="M2 1 V20 H21" fill="none" stroke="#111" stroke-width="1.3"/><path d="M4 15 L9 8 L14 15 L20 5" fill="none" stroke="#3a5a90" stroke-width="1.5"/><path d="M4 13 L9 11 L13 8 L20 12" fill="none" stroke="#8ab0e0" stroke-width="1"/></svg>
<svg class="s" style="left:0;top:0" width="1366" height="768"><path d="M202.5 150.5 L206.5 147.3 V149 H211.5 V152 H206.5 V153.7 Z" fill="#6aa8e0" stroke="#4a88c8" stroke-width="0.6"/><rect x="213" y="152.8" width="2" height="2" fill="#555"/><ellipse cx="219.9" cy="150.5" rx="2.8" ry="3.2" fill="#d8ecfa" stroke="#6a9ad0" stroke-width="2.7"/><rect x="204" y="164.8" width="2" height="2" fill="#555"/><ellipse cx="210.1" cy="162.5" rx="2.8" ry="3.2" fill="#d8ecfa" stroke="#6a9ad0" stroke-width="2.7"/><ellipse cx="219.4" cy="162.5" rx="2.8" ry="3.2" fill="#d8ecfa" stroke="#6a9ad0" stroke-width="2.7"/><rect x="232" y="152.8" width="2" height="2" fill="#555"/><ellipse cx="239" cy="150.5" rx="2.8" ry="3.2" fill="#d8ecfa" stroke="#6a9ad0" stroke-width="2.7"/><ellipse cx="248" cy="150.5" rx="2.8" ry="3.2" fill="#d8ecfa" stroke="#6a9ad0" stroke-width="2.7"/><path d="M239.8 162.6 L235.8 159 V160.8 H230.5 V164.2 H235.8 V166.2 Z" fill="#6aa8e0" stroke="#4a88c8" stroke-width="0.6"/><rect x="241.2" y="164.8" width="2" height="2" fill="#555"/><ellipse cx="247.9" cy="162.5" rx="2.8" ry="3.2" fill="#d8ecfa" stroke="#6a9ad0" stroke-width="2.7"/></svg>
<svg class="s" style="left:0;top:0" width="1366" height="768"><defs><linearGradient id="gDia2" x1="0" y1="0" x2="0" y2="1"><stop offset="0" stop-color="#ff9800"/><stop offset="0.4" stop-color="#f0e000"/><stop offset="1" stop-color="#10d010"/></linearGradient><linearGradient id="gSqX" x1="0" y1="0" x2="0" y2="1"><stop offset="0" stop-color="#80e020"/><stop offset="0.5" stop-color="#e0f000"/><stop offset="1" stop-color="#90e020"/></linearGradient></defs><path d="M282 150.5 V147 H285.5 M298.5 147 H302 V150.5 M302 163.5 V167 H298.5 M285.5 167 H282 V163.5" fill="none" stroke="#000a8c" stroke-width="2"/><path d="M281.8 157.8 Q291 147.2 295 145.2 Q302.5 153.2 302.5 156.2 L294.4 168.4 Z" fill="url(#gDia2)"/><path d="M310.8 146.5 V167.8 M331 146.5 V167.8" stroke="#000a8c" stroke-width="2"/><path d="M311.8 155.9 Q319.7 147.2 323.7 145.2 Q328.2 151.9 328.2 154.9 L322.4 168.4 Z" fill="url(#gDia2)"/><path d="M338.2 147.8 H357.8 M338.2 166.8 H357.8" stroke="#000a8c" stroke-width="2"/><path d="M337.9 157.8 Q348 147.9 352 145.9 Q357.8 153.5 357.8 156.5 L350 167.8 Z" fill="url(#gDia2)"/><path d="M366 150.5 V147 H369.5 M382.5 147 H386 V150.5 M386 163.5 V167 H382.5 M369.5 167 H366 V163.5" fill="none" stroke="#000a8c" stroke-width="2"/><rect x="369" y="150" width="14" height="14" fill="url(#gSqX)" stroke="#000" stroke-width="2"/><path d="M370 151 L382 163 M382 151 L370 163" stroke="#222" stroke-width="0.8"/><path d="M394.8 146.5 V167.8 M415 146.5 V167.8" stroke="#000a8c" stroke-width="2"/><rect x="397" y="150" width="14" height="14" fill="#f4f000" stroke="#000" stroke-width="2"/><rect x="398" y="151" width="6" height="12" fill="#10e010"/><rect x="403" y="151" width="2" height="12" fill="#a0f000"/><path d="M422.2 147.8 H441.8 M422.2 166.8 H441.8" stroke="#000a8c" stroke-width="2"/><rect x="425" y="150" width="14" height="14" fill="#f4f000" stroke="#000" stroke-width="2"/><rect x="426" y="151" width="12" height="5" fill="#10e010"/><rect x="426" y="155.5" width="12" height="2" fill="#a0f000"/></svg>
<div class="b" style="left:3px;top:174px;width:1360px;height:78px;background:#f0f0f0"></div>
<div class="t" style="left:579.30px;top:177.06px;font-size:18px;color:#1a1a1a;">Mass Airflow Frequency (Hz)</div>
<div class="b" style="left:29px;top:200px;width:1333px;height:33px;background:#f0f0f0"></div>
<div class="b" style="left:71px;top:217px;width:15px;height:16px;background:#82f400"></div>
<div class="b" style="left:87px;top:217px;width:50px;height:16px;background:#8af400"></div>
<div class="b" style="left:138px;top:217px;width:50px;height:16px;background:#92f400"></div>
<div class="b" style="left:189px;top:217px;width:50px;height:16px;background:#9af400"></div>
<div class="b" style="left:240px;top:217px;width:50px;height:16px;background:#a3f400"></div>
<div class="b" style="left:291px;top:217px;width:50px;height:16px;background:#b4f400"></div>
<div class="b" style="left:342px;top:217px;width:50px;height:16px;background:#cbff00"></div>
<div class="b" style="left:393px;top:217px;width:50px;height:16px;background:#ddff00"></div>
<div class="b" style="left:444px;top:217px;width:50px;height:16px;background:#edff00"></div>
<div class="b" style="left:495px;top:217px;width:50px;height:16px;background:#f2ff00"></div>
<div class="b" style="left:546px;top:217px;width:50px;height:16px;background:#f9ff00"></div>
<div class="b" style="left:597px;top:217px;width:50px;height:16px;background:#fffc00"></div>
<div class="b" style="left:648px;top:217px;width:50px;height:16px;background:#fff800"></div>
<div class="b" style="left:699px;top:217px;width:50px;height:16px;background:#fff200"></div>
<div class="b" style="left:750px;top:217px;width:50px;height:16px;background:#ffee00"></div>
<div class="b" style="left:801px;top:217px;width:50px;height:16px;background:#ffe800"></div>
<div class="b" style="left:852px;top:217px;width:50px;height:16px;background:#ffe500"></div>
<div class="b" style="left:903px;top:217px;width:50px;height:16px;background:#ffe300"></div>
<div class="b" style="left:954px;top:217px;width:50px;height:16px;background:#ffe100"></div>
<div class="b" style="left:1005px;top:217px;width:50px;height:16px;background:#ffe000"></div>
<div class="b" style="left:1056px;top:217px;width:50px;height:16px;background:#ffde00"></div>
<div class="b" style="left:1107px;top:217px;width:50px;height:16px;background:#ffdc00"></div>
<div class="b" style="left:1158px;top:217px;width:50px;height:16px;background:#ffdb00"></div>
<div class="b" style="left:1209px;top:217px;width:50px;height:16px;background:#ffd900"></div>
<div class="b" style="left:1260px;top:217px;width:50px;height:16px;background:#ffd700"></div>
<div class="b" style="left:1311px;top:217px;width:50px;height:16px;background:#ffd000"></div>
<div class="b" style="left:29px;top:200px;width:1333px;height:1px;background:#a0a0a0"></div>
<div class="b" style="left:29px;top:216px;width:1333px;height:1px;background:#a0a0a0"></div>
<div class="b" style="left:29px;top:233px;width:1333px;height:1px;background:#6a6a6a"></div>
<div class="b" style="left:29px;top:234px;width:1333px;height:1px;background:#fafafa"></div>
<div class="b" style="left:29px;top:200px;width:1px;height:51px;background:#a0a0a0"></div>
<div class="b" style="left:1361px;top:200px;width:1px;height:33px;background:#a0a0a0"></div>
<div class="b" style="left:70px;top:200px;width:1px;height:17px;background:#a0a0a0"></div>
<div class="b" style="left:86px;top:200px;width:1px;height:17px;background:#a0a0a0"></div>
<div class="b" style="left:137px;top:200px;width:1px;height:17px;background:#a0a0a0"></div>
<div class="b" style="left:188px;top:200px;width:1px;height:17px;background:#a0a0a0"></div>
<div class="b" style="left:239px;top:200px;width:1px;height:17px;background:#a0a0a0"></div>
<div class="b" style="left:290px;top:200px;width:1px;height:17px;background:#a0a0a0"></div>
<div class="b" style="left:341px;top:200px;width:1px;height:17px;background:#a0a0a0"></div>
<div class="b" style="left:392px;top:200px;width:1px;height:17px;background:#a0a0a0"></div>
<div class="b" style="left:443px;top:200px;width:1px;height:17px;background:#a0a0a0"></div>
<div class="b" style="left:494px;top:200px;width:1px;height:17px;background:#a0a0a0"></div>
<div class="b" style="left:545px;top:200px;width:1px;height:17px;background:#a0a0a0"></div>
<div class="b" style="left:596px;top:200px;width:1px;height:17px;background:#a0a0a0"></div>
<div class="b" style="left:647px;top:200px;width:1px;height:17px;background:#a0a0a0"></div>
<div class="b" style="left:698px;top:200px;width:1px;height:17px;background:#a0a0a0"></div>
<div class="b" style="left:749px;top:200px;width:1px;height:17px;background:#a0a0a0"></div>
<div class="b" style="left:800px;top:200px;width:1px;height:17px;background:#a0a0a0"></div>
<div class="b" style="left:851px;top:200px;width:1px;height:17px;background:#a0a0a0"></div>
<div class="b" style="left:902px;top:200px;width:1px;height:17px;background:#a0a0a0"></div>
<div class="b" style="left:953px;top:200px;width:1px;height:17px;background:#a0a0a0"></div>
<div class="b" style="left:1004px;top:200px;width:1px;height:17px;background:#a0a0a0"></div>
<div class="b" style="left:1055px;top:200px;width:1px;height:17px;background:#a0a0a0"></div>
<div class="b" style="left:1106px;top:200px;width:1px;height:17px;background:#a0a0a0"></div>
<div class="b" style="left:1157px;top:200px;width:1px;height:17px;background:#a0a0a0"></div>
<div class="b" style="left:1208px;top:200px;width:1px;height:17px;background:#a0a0a0"></div>
<div class="b" style="left:1259px;top:200px;width:1px;height:17px;background:#a0a0a0"></div>
<div class="b" style="left:1310px;top:200px;width:1px;height:17px;background:#a0a0a0"></div>
<div class="b" style="left:1361px;top:200px;width:1px;height:17px;background:#a0a0a0"></div>
<div class="b" style="left:86px;top:217px;width:1px;height:16px;background:rgba(255,255,255,0.4)"></div>
<div class="b" style="left:137px;top:217px;width:1px;height:16px;background:rgba(255,255,255,0.4)"></div>
<div class="b" style="left:188px;top:217px;width:1px;height:16px;background:rgba(255,255,255,0.4)"></div>
<div class="b" style="left:239px;top:217px;width:1px;height:16px;background:rgba(255,255,255,0.4)"></div>
<div class="b" style="left:290px;top:217px;width:1px;height:16px;background:rgba(255,255,255,0.4)"></div>
<div class="b" style="left:341px;top:217px;width:1px;height:16px;background:rgba(255,255,255,0.4)"></div>
<div class="b" style="left:392px;top:217px;width:1px;height:16px;background:rgba(255,255,255,0.4)"></div>
<div class="b" style="left:443px;top:217px;width:1px;height:16px;background:rgba(255,255,255,0.4)"></div>
<div class="b" style="left:494px;top:217px;width:1px;height:16px;background:rgba(255,255,255,0.4)"></div>
<div class="b" style="left:545px;top:217px;width:1px;height:16px;background:rgba(255,255,255,0.4)"></div>
<div class="b" style="left:596px;top:217px;width:1px;height:16px;background:rgba(255,255,255,0.4)"></div>
<div class="b" style="left:647px;top:217px;width:1px;height:16px;background:rgba(255,255,255,0.4)"></div>
<div class="b" style="left:698px;top:217px;width:1px;height:16px;background:rgba(255,255,255,0.4)"></div>
<div class="b" style="left:749px;top:217px;width:1px;height:16px;background:rgba(255,255,255,0.4)"></div>
<div class="b" style="left:800px;top:217px;width:1px;height:16px;background:rgba(255,255,255,0.4)"></div>
<div class="b" style="left:851px;top:217px;width:1px;height:16px;background:rgba(255,255,255,0.4)"></div>
<div class="b" style="left:902px;top:217px;width:1px;height:16px;background:rgba(255,255,255,0.4)"></div>
<div class="b" style="left:953px;top:217px;width:1px;height:16px;background:rgba(255,255,255,0.4)"></div>
<div class="b" style="left:1004px;top:217px;width:1px;height:16px;background:rgba(255,255,255,0.4)"></div>
<div class="b" style="left:1055px;top:217px;width:1px;height:16px;background:rgba(255,255,255,0.4)"></div>
<div class="b" style="left:1106px;top:217px;width:1px;height:16px;background:rgba(255,255,255,0.4)"></div>
<div class="b" style="left:1157px;top:217px;width:1px;height:16px;background:rgba(255,255,255,0.4)"></div>
<div class="b" style="left:1208px;top:217px;width:1px;height:16px;background:rgba(255,255,255,0.4)"></div>
<div class="b" style="left:1259px;top:217px;width:1px;height:16px;background:rgba(255,255,255,0.4)"></div>
<div class="b" style="left:1310px;top:217px;width:1px;height:16px;background:rgba(255,255,255,0.4)"></div>
<div class="b" style="left:70px;top:217px;width:1px;height:16px;background:#a0a0a0"></div>
<div class="t" style="left:71.30px;top:202.64px;font-size:12px;color:#1a1a1a;transform:scaleX(0.8900);transform-origin:0 0;">50</div>
<div class="t" style="left:33.20px;top:218.64px;font-size:12px;color:#1a1a1a;transform:scaleX(0.9356);transform-origin:0 0;">Airflow</div>
<div class="t" style="left:71.30px;top:218.64px;font-size:12px;color:#0a3000;transform:scaleX(0.8900);transform-origin:0 0;">30</div>
<div class="t" style="left:108.00px;top:202.64px;font-size:12px;color:#1a1a1a;transform:scaleX(0.8800);transform-origin:0 0;">8,100</div>
<div class="t" style="left:101.69px;top:218.64px;font-size:12px;color:#0a3a00;transform:scaleX(0.8900);transform-origin:0 0;">445.94</div>
<div class="t" style="left:159.00px;top:202.64px;font-size:12px;color:#1a1a1a;transform:scaleX(0.8800);transform-origin:0 0;">8,250</div>
<div class="t" style="left:152.69px;top:218.64px;font-size:12px;color:#0a3a00;transform:scaleX(0.8900);transform-origin:0 0;">467.26</div>
<div class="t" style="left:210.00px;top:202.64px;font-size:12px;color:#1a1a1a;transform:scaleX(0.8800);transform-origin:0 0;">8,400</div>
<div class="t" style="left:203.69px;top:218.64px;font-size:12px;color:#0a3a00;transform:scaleX(0.8900);transform-origin:0 0;">490.35</div>
<div class="t" style="left:261.00px;top:202.64px;font-size:12px;color:#1a1a1a;transform:scaleX(0.8800);transform-origin:0 0;">8,550</div>
<div class="t" style="left:254.69px;top:218.64px;font-size:12px;color:#0a3a00;transform:scaleX(0.8900);transform-origin:0 0;">514.02</div>
<div class="t" style="left:312.00px;top:202.64px;font-size:12px;color:#1a1a1a;transform:scaleX(0.8800);transform-origin:0 0;">8,700</div>
<div class="t" style="left:305.69px;top:218.64px;font-size:12px;color:#0a3a00;transform:scaleX(0.8900);transform-origin:0 0;">555.40</div>
<div class="t" style="left:363.00px;top:202.64px;font-size:12px;color:#1a1a1a;transform:scaleX(0.8800);transform-origin:0 0;">8,850</div>
<div class="t" style="left:356.69px;top:218.64px;font-size:12px;color:#141400;transform:scaleX(0.8900);transform-origin:0 0;">593.77</div>
<div class="t" style="left:414.00px;top:202.64px;font-size:12px;color:#1a1a1a;transform:scaleX(0.8800);transform-origin:0 0;">9,000</div>
<div class="t" style="left:407.69px;top:218.64px;font-size:12px;color:#141400;transform:scaleX(0.8900);transform-origin:0 0;">625.96</div>
<div class="t" style="left:465.00px;top:202.64px;font-size:12px;color:#1a1a1a;transform:scaleX(0.8800);transform-origin:0 0;">9,150</div>
<div class="t" style="left:458.69px;top:218.64px;font-size:12px;color:#141400;transform:scaleX(0.8900);transform-origin:0 0;">655.82</div>
<div class="t" style="left:516.00px;top:202.64px;font-size:12px;color:#1a1a1a;transform:scaleX(0.8800);transform-origin:0 0;">9,300</div>
<div class="t" style="left:509.69px;top:218.64px;font-size:12px;color:#141400;transform:scaleX(0.8900);transform-origin:0 0;">678.56</div>
<div class="t" style="left:567.00px;top:202.64px;font-size:12px;color:#1a1a1a;transform:scaleX(0.8800);transform-origin:0 0;">9,450</div>
<div class="t" style="left:560.69px;top:218.64px;font-size:12px;color:#141400;transform:scaleX(0.8900);transform-origin:0 0;">710.33</div>
<div class="t" style="left:618.00px;top:202.64px;font-size:12px;color:#1a1a1a;transform:scaleX(0.8800);transform-origin:0 0;">9,600</div>
<div class="t" style="left:611.69px;top:218.64px;font-size:12px;color:#141400;transform:scaleX(0.8900);transform-origin:0 0;">760.62</div>
<div class="t" style="left:669.00px;top:202.64px;font-size:12px;color:#1a1a1a;transform:scaleX(0.8800);transform-origin:0 0;">9,750</div>
<div class="t" style="left:662.69px;top:218.64px;font-size:12px;color:#141400;transform:scaleX(0.8900);transform-origin:0 0;">801.95</div>
<div class="t" style="left:720.00px;top:202.64px;font-size:12px;color:#1a1a1a;transform:scaleX(0.8800);transform-origin:0 0;">9,900</div>
<div class="t" style="left:713.69px;top:218.64px;font-size:12px;color:#141400;transform:scaleX(0.8900);transform-origin:0 0;">858.79</div>
<div class="t" style="left:765.06px;top:202.64px;font-size:12px;color:#1a1a1a;transform:scaleX(0.8800);transform-origin:0 0;">10,050</div>
<div class="t" style="left:764.69px;top:218.64px;font-size:12px;color:#141400;transform:scaleX(0.8900);transform-origin:0 0;">901.34</div>
<div class="t" style="left:816.06px;top:202.64px;font-size:12px;color:#1a1a1a;transform:scaleX(0.8800);transform-origin:0 0;">10,200</div>
<div class="t" style="left:815.69px;top:218.64px;font-size:12px;color:#141400;transform:scaleX(0.8900);transform-origin:0 0;">965.31</div>
<div class="t" style="left:867.06px;top:202.64px;font-size:12px;color:#1a1a1a;transform:scaleX(0.8800);transform-origin:0 0;">10,350</div>
<div class="t" style="left:857.79px;top:218.64px;font-size:12px;color:#141400;transform:scaleX(0.8900);transform-origin:0 0;">1,004.53</div>
<div class="t" style="left:918.06px;top:202.64px;font-size:12px;color:#1a1a1a;transform:scaleX(0.8800);transform-origin:0 0;">10,500</div>
<div class="t" style="left:908.79px;top:218.64px;font-size:12px;color:#141400;transform:scaleX(0.8900);transform-origin:0 0;">1,045.96</div>
<div class="t" style="left:969.06px;top:202.64px;font-size:12px;color:#1a1a1a;transform:scaleX(0.8800);transform-origin:0 0;">10,650</div>
<div class="t" style="left:959.79px;top:218.64px;font-size:12px;color:#141400;transform:scaleX(0.8900);transform-origin:0 0;">1,088.89</div>
<div class="t" style="left:1020.06px;top:202.64px;font-size:12px;color:#1a1a1a;transform:scaleX(0.8800);transform-origin:0 0;">10,800</div>
<div class="t" style="left:1010.79px;top:218.64px;font-size:12px;color:#141400;transform:scaleX(0.8900);transform-origin:0 0;">1,129.06</div>
<div class="t" style="left:1071.06px;top:202.64px;font-size:12px;color:#1a1a1a;transform:scaleX(0.8800);transform-origin:0 0;">10,950</div>
<div class="t" style="left:1061.79px;top:218.64px;font-size:12px;color:#141400;transform:scaleX(0.8900);transform-origin:0 0;">1,166.51</div>
<div class="t" style="left:1122.83px;top:202.64px;font-size:12px;color:#1a1a1a;transform:scaleX(0.8800);transform-origin:0 0;">11,100</div>
<div class="t" style="left:1112.79px;top:218.64px;font-size:12px;color:#141400;transform:scaleX(0.8900);transform-origin:0 0;">1,204.38</div>
<div class="t" style="left:1173.83px;top:202.64px;font-size:12px;color:#1a1a1a;transform:scaleX(0.8800);transform-origin:0 0;">11,250</div>
<div class="t" style="left:1163.79px;top:218.64px;font-size:12px;color:#141400;transform:scaleX(0.8900);transform-origin:0 0;">1,242.94</div>
<div class="t" style="left:1224.83px;top:202.64px;font-size:12px;color:#1a1a1a;transform:scaleX(0.8800);transform-origin:0 0;">11,400</div>
<div class="t" style="left:1214.79px;top:218.64px;font-size:12px;color:#141400;transform:scaleX(0.8900);transform-origin:0 0;">1,281.50</div>
<div class="t" style="left:1275.83px;top:202.64px;font-size:12px;color:#1a1a1a;transform:scaleX(0.8800);transform-origin:0 0;">11,550</div>
<div class="t" style="left:1265.79px;top:218.64px;font-size:12px;color:#141400;transform:scaleX(0.8900);transform-origin:0 0;">1,320.06</div>
<div class="t" style="left:1326.83px;top:202.64px;font-size:12px;color:#1a1a1a;transform:scaleX(0.8800);transform-origin:0 0;">11,700</div>
<div class="t" style="left:1316.79px;top:218.64px;font-size:12px;color:#141400;transform:scaleX(0.8900);transform-origin:0 0;">1,489.10</div>
<div class="b" style="left:1311px;top:217px;width:50px;height:16px;border:1px dotted #222"></div>
<div class="b" style="left:30px;top:235px;width:1331px;height:16px;background:#f0f0f0"></div>
<svg class="s" style="left:35px;top:239px" width="7" height="8" viewBox="0 0 7 8"><path d="M5.5 0.5 L1.5 4 L5.5 7.5" fill="none" stroke="#606060" stroke-width="1.8"/></svg>
<svg class="s" style="left:1351px;top:239px" width="7" height="8" viewBox="0 0 7 8"><path d="M1.5 0.5 L5.5 4 L1.5 7.5" fill="none" stroke="#606060" stroke-width="1.8"/></svg>
<div class="b" style="left:732px;top:235px;width:333px;height:15px;background:#c8c8c8"></div>
<div class="b" style="left:3px;top:252px;width:1360px;height:1px;background:#707070"></div>
<div class="b" style="left:3px;top:253px;width:1360px;height:5px;background:#f0f0f0"></div>
<div class="b" style="left:3px;top:258px;width:1360px;height:1px;background:#707070"></div>
<svg class="s" style="left:0;top:0" width="1366" height="768"><rect x="97" y="333" width="2" height="354" fill="#000"/><rect x="97" y="685" width="1106" height="2" fill="#000"/><rect x="91" y="685" width="6" height="2" fill="#000"/><rect x="93" y="670" width="4" height="2" fill="#000"/><rect x="91" y="655" width="6" height="2" fill="#000"/><rect x="93" y="641" width="4" height="2" fill="#000"/><rect x="91" y="626" width="6" height="2" fill="#000"/><rect x="93" y="611" width="4" height="2" fill="#000"/><rect x="91" y="597" width="6" height="2" fill="#000"/><rect x="93" y="582" width="4" height="2" fill="#000"/><rect x="91" y="567" width="6" height="2" fill="#000"/><rect x="93" y="553" width="4" height="2" fill="#000"/><rect x="91" y="538" width="6" height="2" fill="#000"/><rect x="93" y="524" width="4" height="2" fill="#000"/><rect x="91" y="509" width="6" height="2" fill="#000"/><rect x="93" y="494" width="4" height="2" fill="#000"/><rect x="91" y="480" width="6" height="2" fill="#000"/><rect x="93" y="465" width="4" height="2" fill="#000"/><rect x="91" y="451" width="6" height="2" fill="#000"/><rect x="93" y="436" width="4" height="2" fill="#000"/><rect x="91" y="421" width="6" height="2" fill="#000"/><rect x="93" y="407" width="4" height="2" fill="#000"/><rect x="91" y="392" width="6" height="2" fill="#000"/><rect x="93" y="377" width="4" height="2" fill="#000"/><rect x="91" y="363" width="6" height="2" fill="#000"/><rect x="93" y="348" width="4" height="2" fill="#000"/><rect x="91" y="333" width="6" height="2" fill="#000"/><rect x="97" y="687" width="2" height="6" fill="#000"/><rect x="131" y="687" width="2" height="4" fill="#000"/><rect x="166" y="687" width="2" height="6" fill="#000"/><rect x="201" y="687" width="2" height="4" fill="#000"/><rect x="235" y="687" width="2" height="6" fill="#000"/><rect x="269" y="687" width="2" height="4" fill="#000"/><rect x="304" y="687" width="2" height="6" fill="#000"/><rect x="339" y="687" width="2" height="4" fill="#000"/><rect x="373" y="687" width="2" height="6" fill="#000"/><rect x="407" y="687" width="2" height="4" fill="#000"/><rect x="442" y="687" width="2" height="6" fill="#000"/><rect x="477" y="687" width="2" height="4" fill="#000"/><rect x="511" y="687" width="2" height="6" fill="#000"/><rect x="545" y="687" width="2" height="4" fill="#000"/><rect x="580" y="687" width="2" height="6" fill="#000"/><rect x="615" y="687" width="2" height="4" fill="#000"/><rect x="649" y="687" width="2" height="6" fill="#000"/><rect x="683" y="687" width="2" height="4" fill="#000"/><rect x="718" y="687" width="2" height="6" fill="#000"/><rect x="753" y="687" width="2" height="4" fill="#000"/><rect x="787" y="687" width="2" height="6" fill="#000"/><rect x="822" y="687" width="2" height="4" fill="#000"/><rect x="856" y="687" width="2" height="6" fill="#000"/><rect x="891" y="687" width="2" height="4" fill="#000"/><rect x="925" y="687" width="2" height="6" fill="#000"/><rect x="960" y="687" width="2" height="4" fill="#000"/><rect x="994" y="687" width="2" height="6" fill="#000"/><rect x="1029" y="687" width="2" height="4" fill="#000"/><rect x="1063" y="687" width="2" height="6" fill="#000"/><rect x="1097" y="687" width="2" height="4" fill="#000"/><rect x="1132" y="687" width="2" height="6" fill="#000"/><rect x="1167" y="687" width="2" height="4" fill="#000"/><rect x="1201" y="687" width="2" height="6" fill="#000"/></svg>
<div class="t" style="left:80.88px;top:680.49px;font-size:11px;color:#1a1a1a;">0</div>
<div class="t" style="left:68.62px;top:651.24px;font-size:11px;color:#1a1a1a;">200</div>
<div class="t" style="left:68.62px;top:621.99px;font-size:11px;color:#1a1a1a;">400</div>
<div class="t" style="left:68.62px;top:592.74px;font-size:11px;color:#1a1a1a;">600</div>
<div class="t" style="left:68.62px;top:563.49px;font-size:11px;color:#1a1a1a;">800</div>
<div class="t" style="left:62.50px;top:534.24px;font-size:11px;color:#1a1a1a;">1000</div>
<div class="t" style="left:62.50px;top:504.99px;font-size:11px;color:#1a1a1a;">1200</div>
<div class="t" style="left:62.50px;top:475.74px;font-size:11px;color:#1a1a1a;">1400</div>
<div class="t" style="left:62.50px;top:446.49px;font-size:11px;color:#1a1a1a;">1600</div>
<div class="t" style="left:62.50px;top:417.24px;font-size:11px;color:#1a1a1a;">1800</div>
<div class="t" style="left:62.50px;top:387.99px;font-size:11px;color:#1a1a1a;">2000</div>
<div class="t" style="left:62.50px;top:358.74px;font-size:11px;color:#1a1a1a;">2200</div>
<div class="t" style="left:62.50px;top:329.49px;font-size:11px;color:#1a1a1a;">2400</div>
<div class="t" style="left:93.94px;top:696.59px;font-size:11px;color:#1a1a1a">0</div>
<div class="t" style="left:153.75px;top:696.59px;font-size:11px;color:#1a1a1a">1000</div>
<div class="t" style="left:222.75px;top:696.59px;font-size:11px;color:#1a1a1a">2000</div>
<div class="t" style="left:291.75px;top:696.59px;font-size:11px;color:#1a1a1a">3000</div>
<div class="t" style="left:360.75px;top:696.59px;font-size:11px;color:#1a1a1a">4000</div>
<div class="t" style="left:429.75px;top:696.59px;font-size:11px;color:#1a1a1a">5000</div>
<div class="t" style="left:498.75px;top:696.59px;font-size:11px;color:#1a1a1a">6000</div>
<div class="t" style="left:567.75px;top:696.59px;font-size:11px;color:#1a1a1a">7000</div>
<div class="t" style="left:636.75px;top:696.59px;font-size:11px;color:#1a1a1a">8000</div>
<div class="t" style="left:705.75px;top:696.59px;font-size:11px;color:#1a1a1a">9000</div>
<div class="t" style="left:771.69px;top:696.59px;font-size:11px;color:#1a1a1a">10000</div>
<div class="t" style="left:841.13px;top:696.59px;font-size:11px;color:#1a1a1a">11000</div>
<div class="t" style="left:909.69px;top:696.59px;font-size:11px;color:#1a1a1a">12000</div>
<div class="t" style="left:978.69px;top:696.59px;font-size:11px;color:#1a1a1a">13000</div>
<div class="t" style="left:1047.69px;top:696.59px;font-size:11px;color:#1a1a1a">14000</div>
<div class="t" style="left:1116.69px;top:696.59px;font-size:11px;color:#1a1a1a">15000</div>
<div class="t" style="left:1185.69px;top:696.59px;font-size:11px;color:#1a1a1a">16000</div>
<div class="t" style="left:577.80px;top:709.59px;font-size:11px;color:#1a1a1a;transform:scaleX(1.0183);transform-origin:0 0;">Mass Airflow Frequency (Hz)</div>
<div class="t" style="left:47px;top:504px;font-size:11px;color:#1a1a1a;transform:rotate(-90deg);transform-origin:8px 6px">g/s</div>
<div class="b" style="left:1267px;top:523px;width:30px;height:3px;background:#b8862b"></div>
<div class="t" style="left:1302.00px;top:518.14px;font-size:12px;color:#1a1a1a;transform:scaleX(0.9412);transform-origin:0 0;">Airflow</div>
<svg class="s" style="left:0;top:0" width="1366" height="768"><polyline points="98.0,685.5 125.0,684.5 166.0,683.5 236.0,683.0 305.0,681.0 374.0,676.0 409.5,671.8 444.7,668.5 477.6,664.3 510.6,660.8 539.1,656.9 576.5,645.2 616.0,638.2 645.6,623.5 656.9,620.3 667.2,617.2 677.6,613.8 688.0,610.3 698.3,604.3 708.7,598.7 719.0,594.0 729.4,589.6 739.7,586.3 750.1,581.6 760.4,574.3 770.8,568.2 781.1,559.9 791.5,553.7 801.8,544.3 812.2,538.6 822.5,532.5 832.9,526.2 843.2,520.4 853.6,514.9 863.9,509.4 874.3,503.7 884.6,498.1 895.0,492.4 905.3,467.7 933.8,451.2 965.0,430.4 996.2,412.7 1008.8,404.4 1056.7,377.3 1071.2,366.9 1098.3,353.3 1132.7,335.0" fill="none" stroke="#9c7c38" stroke-width="1" shape-rendering="crispEdges"/></svg></body></html>
